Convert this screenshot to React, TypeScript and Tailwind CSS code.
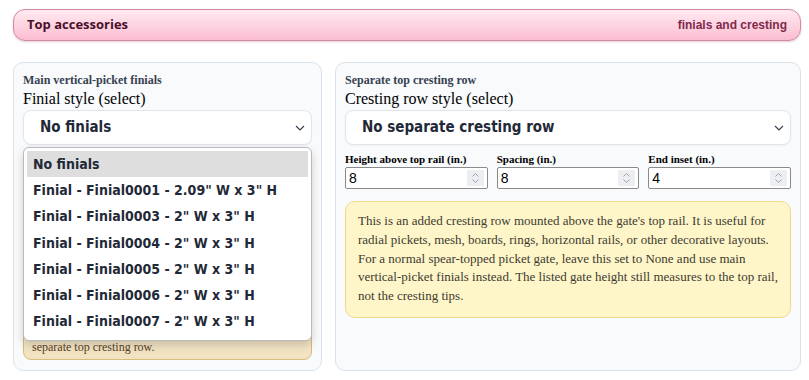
import React from 'react';

const serif = { fontFamily: '"Liberation Serif", "Times New Roman", serif' };
const sans = { fontFamily: '"DejaVu Sans Condensed", "DejaVu Sans", Verdana, sans-serif' };

const finials = [
  'No finials',
  'Finial - Finial0001 - 2.09" W x 3" H',
  'Finial - Finial0003 - 2" W x 3" H',
  'Finial - Finial0004 - 2" W x 3" H',
  'Finial - Finial0005 - 2" W x 3" H',
  'Finial - Finial0006 - 2" W x 3" H',
  'Finial - Finial0007 - 2" W x 3" H',
];

function Chevron() {
  return (
    <svg width="10" height="6" viewBox="0 0 10 6" className="shrink-0">
      <path d="M1 1l4 4 4-4" fill="none" stroke="#374151" strokeWidth="1.2" />
    </svg>
  );
}

function FakeSelect({ value }: { value: string }) {
  return (
    <div className="h-[35px] flex items-center justify-between bg-white border border-[#e2e6ea] rounded-[8px] pl-[16px] pr-[6px] shadow-[0_1px_2px_rgba(0,0,0,0.04)]">
      <span className="text-[15px] font-bold text-[#1f2937] font-stretch-condensed" style={sans}>{value}</span>
      <Chevron />
    </div>
  );
}

function NumberField({ label, value }: { label: string; value: string }) {
  return (
    <div className="flex flex-col">
      <span className="text-[11px] leading-[14px] font-bold text-black" style={serif}>{label}</span>
      <div className="mt-[1px] h-[22px] flex items-center justify-between bg-white border border-[#8a8a8a] rounded-[2px] pl-[3px] pr-[3px]">
        <span className="text-[14px] text-black" style={{ fontFamily: '"Liberation Sans", Arial, sans-serif' }}>{value}</span>
        <div className="w-[17px] h-[16px] bg-[#eceef1] flex flex-col items-center justify-center gap-[2px]">
          <svg width="7" height="4" viewBox="0 0 7 4"><path d="M0.5 3.5l3-3 3 3" fill="none" stroke="#9ca3af" strokeWidth="1" /></svg>
          <svg width="7" height="4" viewBox="0 0 7 4"><path d="M0.5 0.5l3 3 3-3" fill="none" stroke="#9ca3af" strokeWidth="1" /></svg>
        </div>
      </div>
    </div>
  );
}

export default function App() {
  return (
    <main className="w-[809px] h-[380px] bg-white pl-[13px] pr-[8px] pt-[9px] overflow-hidden">
      <div className="h-[32px] flex items-center justify-between rounded-[12px] border border-[#d08aa6] bg-gradient-to-b from-[#ffeaf1] to-[#fbbdd1] px-[13px] shadow-[0_1px_2px_rgba(160,60,100,0.25)]">
        <span className="text-[13px] font-bold text-[#4a0f2a]" style={{ fontFamily: '"Open Sans", sans-serif' }}>Top accessories</span>
        <span className="text-[12px] font-bold text-[#7f2a4c]" style={{ fontFamily: '"Liberation Sans", Arial, sans-serif' }}>finials and cresting</span>
      </div>

      <div className="mt-[21px] grid grid-cols-[309px_1fr] gap-[13px] h-[309px]">
        <section className="flex flex-col bg-[#f8fafc] border border-[#dbe3ea] rounded-[10px] p-[9px] pb-[10px]">
          <h3 className="text-[12px] leading-[16px] font-bold text-[#374151]" style={serif}>Main vertical-picket finials</h3>
          <label className="text-[16px] leading-[20px] text-black mt-[1px]" style={serif}>Finial style (select)</label>
          <div className="relative mt-[1px]">
            <FakeSelect value="No finials" />
            <ul className="absolute left-0 right-0 top-full mt-[2px] z-10 bg-white border border-[#b9b9b9] rounded-[6px] p-[3px] pb-[5px] shadow-[0_4px_10px_rgba(0,0,0,0.18)] font-stretch-condensed" style={sans}>
              {finials.map((f, i) => (
                <li
                  key={f}
                  className={`h-[26.3px] flex items-center px-[6px] text-[14px] font-bold text-[#1f2937] whitespace-nowrap ${i === 0 ? 'bg-[#dedede]' : ''}`}
                >
                  {f}
                </li>
              ))}
            </ul>
          </div>
          <div className="mt-auto rounded-[8px] border border-[#d9bb7c] bg-gradient-to-b from-[#fbf1d9] to-[#f1e2c0] px-[8px] pt-[7px] pb-[4px] text-[12px] leading-[16px] text-[#5a3d1c]" style={serif}>
            Finials sit on the tops of the main vertical pickets.
            <br />
            For decorative pieces above the top rail, use the
            <br />
            separate top cresting row.
          </div>
        </section>

        <section className="flex flex-col bg-[#f8fafc] border border-[#dbe3ea] rounded-[10px] p-[9px]">
          <h3 className="text-[12px] leading-[16px] font-bold text-[#374151]" style={serif}>Separate top cresting row</h3>
          <label className="text-[16px] leading-[20px] text-black mt-[1px]" style={serif}>Cresting row style (select)</label>
          <div className="mt-[1px]">
            <FakeSelect value="No separate cresting row" />
          </div>
          <div className="mt-[7px] grid grid-cols-3 gap-[9px]">
            <NumberField label="Height above top rail (in.)" value="8" />
            <NumberField label="Spacing (in.)" value="8" />
            <NumberField label="End inset (in.)" value="4" />
          </div>
          <div className="mt-[12px] rounded-[10px] border border-[#ecd98c] bg-[#fef6c9] px-[12px] pt-[10px] pb-[11px] text-[13px] leading-[18.8px] text-[#3d3a30]" style={serif}>
            This is an added cresting row mounted above the gate's top rail. It is useful for radial pickets, mesh, boards, rings, horizontal rails, or other decorative layouts. For a normal spear-topped picket gate, leave this set to None and use main vertical-picket finials instead. The listed gate height still measures to the top rail, not the cresting tips.
          </div>
        </section>
      </div>
    </main>
  );
}
